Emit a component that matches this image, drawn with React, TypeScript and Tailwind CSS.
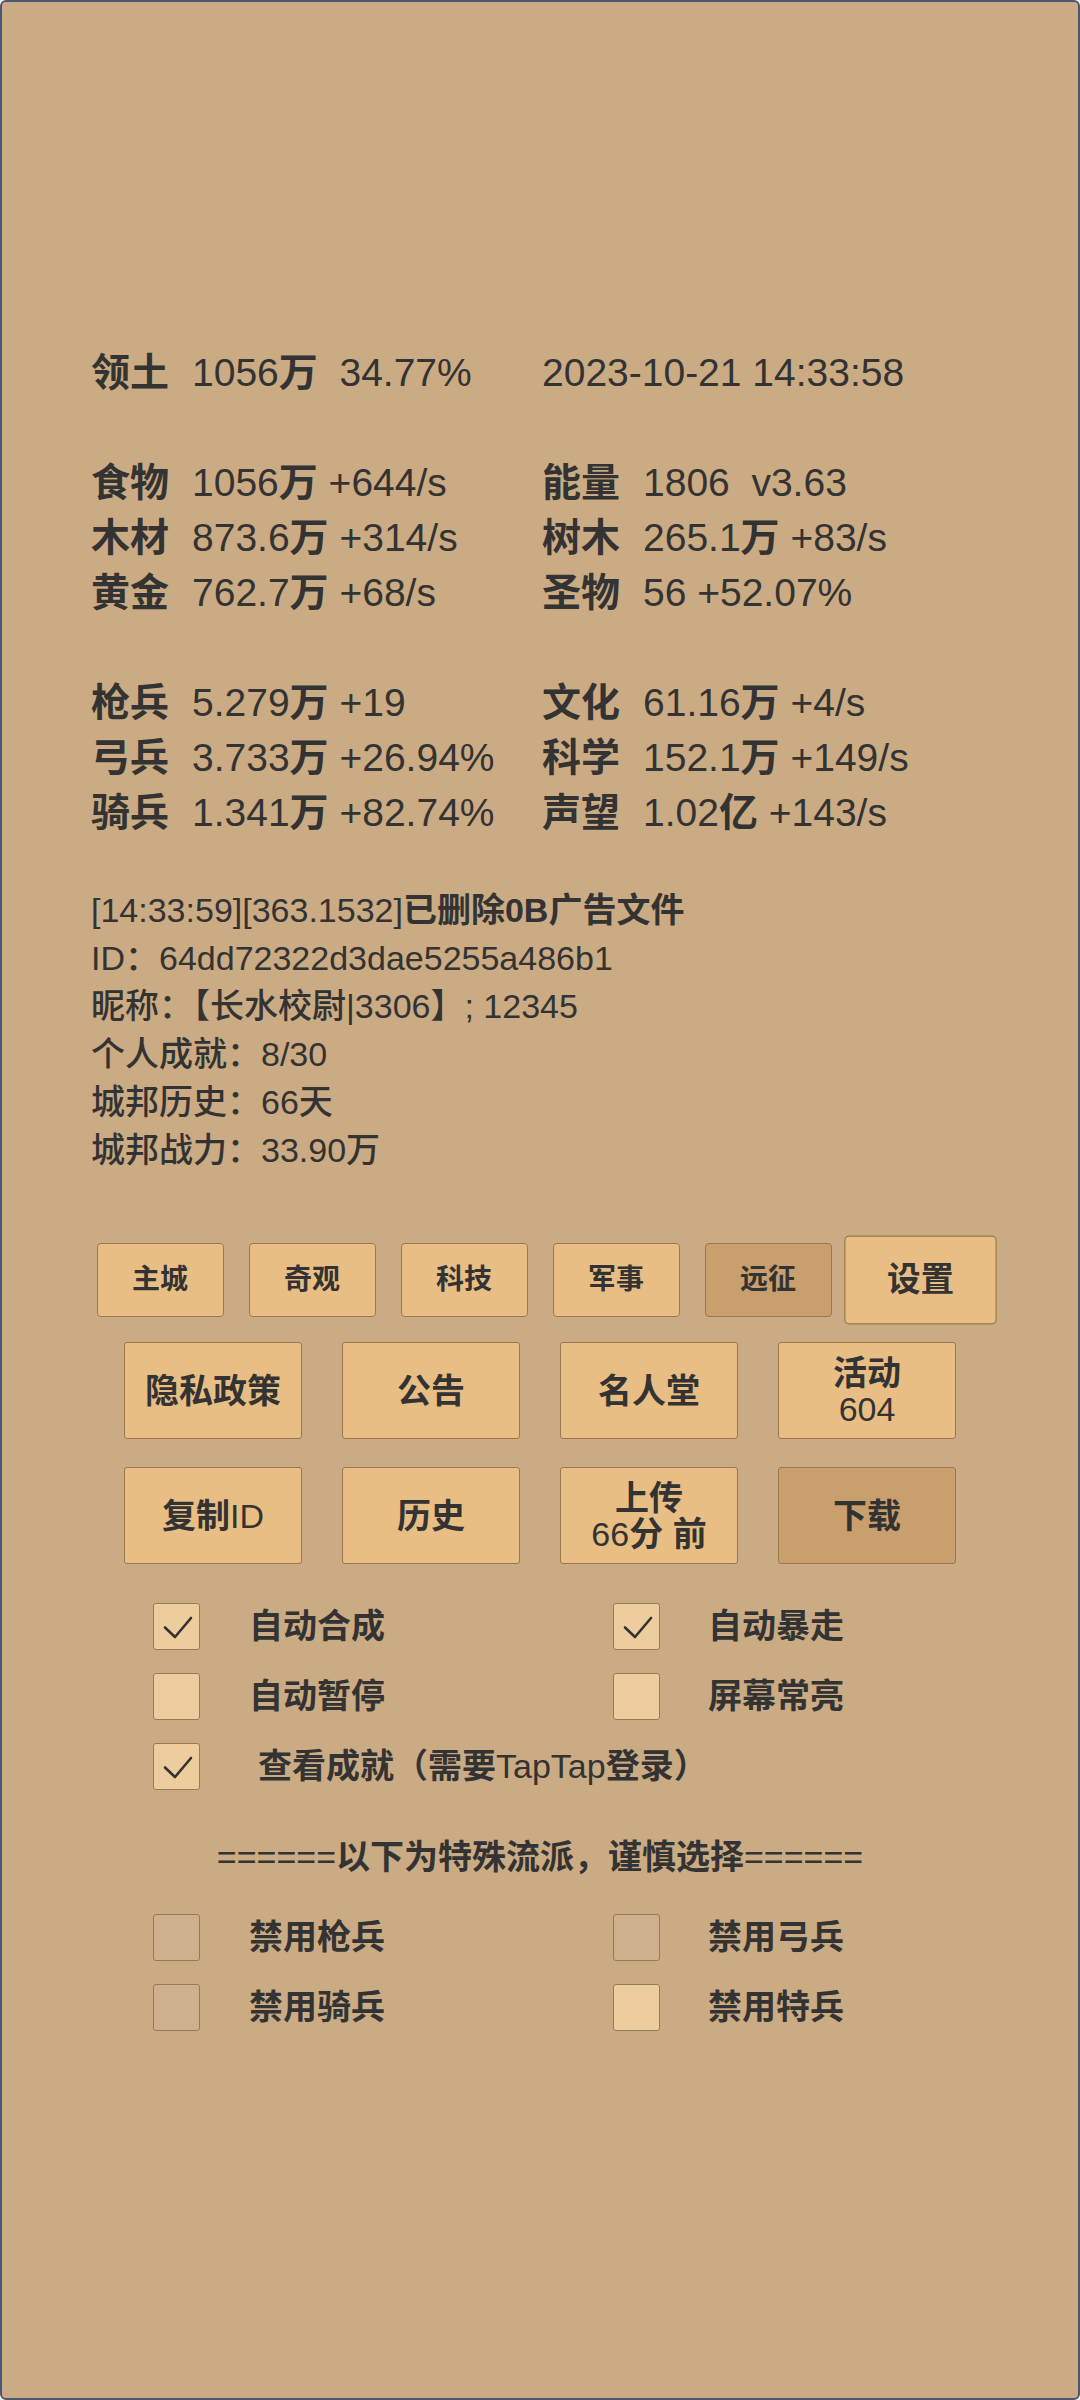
const font = { fontFamily: '"Liberation Sans", "Noto Sans CJK SC", sans-serif' };

const leftStats: [string, string][] = [
  ["领土", "1056万  34.77%"],
  ["", ""],
  ["食物", "1056万 +644/s"],
  ["木材", "873.6万 +314/s"],
  ["黄金", "762.7万 +68/s"],
  ["", ""],
  ["枪兵", "5.279万 +19"],
  ["弓兵", "3.733万 +26.94%"],
  ["骑兵", "1.341万 +82.74%"],
];

const rightStats: [string, string][] = [
  ["", "2023-10-21 14:33:58"],
  ["", ""],
  ["能量", "1806  v3.63"],
  ["树木", "265.1万 +83/s"],
  ["圣物", "56 +52.07%"],
  ["", ""],
  ["文化", "61.16万 +4/s"],
  ["科学", "152.1万 +149/s"],
  ["声望", "1.02亿 +143/s"],
];

const logLines = [
  "ID：64dd72322d3dae5255a486b1",
  "昵称：【长水校尉|3306】; 12345",
  "个人成就：8/30",
  "城邦历史：66天",
  "城邦战力：33.90万",
];

// CJK runs get a heavier weight, latin runs stay regular (as in the game UI)
function Mixed({ text, cjk = "font-bold" }: { text: string; cjk?: string }) {
  const parts = text.split(/([\u3000-\u303f\u4e00-\u9fff\uff00-\uffef]+)/);
  return (
    <>
      {parts.map((p, i) =>
        p === "" ? null : /[\u3000-\u303f\u4e00-\u9fff\uff00-\uffef]/.test(p) ? (
          <span key={i} className={cjk}>
            {p}
          </span>
        ) : (
          <span key={i} className="font-normal">
            {p}
          </span>
        )
      )}
    </>
  );
}

function StatLine({ label, value }: { label: string; value: string }) {
  if (!label && !value) return <div className="h-[55px]" />;
  if (!label) return <div className="h-[55px] whitespace-pre">{value}</div>;
  return (
    <div className="h-[55px] flex whitespace-pre">
      <span className="w-[101px] font-bold">{label}</span>
      <span>
        <Mixed text={value} />
      </span>
    </div>
  );
}

function TabButton({ label, dark, big }: { label: string; dark?: boolean; big?: boolean }) {
  return (
    <div
      className={`w-[127px] h-[74px] flex items-center justify-center rounded-[4px] border border-[#9a784c] text-[28px] font-bold text-[#333] ${
        dark ? "bg-[#c99f6e]" : "bg-[#e9be85]"
      } ${big ? "scale-120" : ""}`}
    >
      {label}
    </div>
  );
}

function BigButton({ lines, dark }: { lines: string[]; dark?: boolean }) {
  return (
    <div
      className={`w-[178px] h-[97px] flex flex-col items-center justify-center rounded-[3px] border border-[#9a784c] text-[34px] leading-[36px] text-[#333] whitespace-pre ${
        dark ? "bg-[#c99f6e]" : "bg-[#e9be85]"
      }`}
    >
      {lines.map((l) => (
        <span key={l}>
          <Mixed text={l} />
        </span>
      ))}
    </div>
  );
}

function Check({ checked, muted }: { checked?: boolean; muted?: boolean }) {
  return (
    <div
      className={`w-[47px] h-[47px] shrink-0 rounded-[3px] border border-[#9a7a55] ${
        muted ? "bg-[#ceb08f]" : "bg-[#edcc9e]"
      }`}
    >
      {checked && (
        <svg width="47" height="47" viewBox="0 0 47 47">
          <polyline points="11,23.5 21,33 37,14" fill="none" stroke="#333" strokeWidth="2.6" strokeLinecap="round" strokeLinejoin="round" />
        </svg>
      )}
    </div>
  );
}

function CheckItem({ label, checked, muted, gap = "ml-[49px]" }: { label: string; checked?: boolean; muted?: boolean; gap?: string }) {
  return (
    <div className="flex items-center h-[47px]">
      <Check checked={checked} muted={muted} />
      <span className={`${gap} text-[34px] text-[#333] whitespace-pre`}>
        <Mixed text={label} />
      </span>
    </div>
  );
}

export default function App() {
  return (
    <div
      className="w-[1080px] h-[2400px] box-border bg-[#cbab83] border-2 border-[#4b5875] rounded-md text-[#333] pt-[343px] overflow-hidden"
      style={font}
    >
      {/* stats */}
      <div className="pl-[89px] grid grid-cols-[451px_1fr] text-[39px] leading-[55px]">
        <div>
          {leftStats.map(([l, v], i) => (
            <StatLine key={i} label={l} value={v} />
          ))}
        </div>
        <div>
          {rightStats.map(([l, v], i) => (
            <StatLine key={i} label={l} value={v} />
          ))}
        </div>
      </div>

      {/* log */}
      <div className="mt-[46px] pl-[89px] text-[34px] leading-[48px]">
        <div className="whitespace-pre">
          [14:33:59][363.1532]<span className="font-bold">已删除0B广告文件</span>
        </div>
        {logLines.map((l) => (
          <div key={l} className="whitespace-pre">
            <Mixed text={l} cjk="font-medium" />
          </div>
        ))}
      </div>

      {/* buttons */}
      <div className="mt-[69px] flex justify-center gap-[25px]">
        <TabButton label="主城" />
        <TabButton label="奇观" />
        <TabButton label="科技" />
        <TabButton label="军事" />
        <TabButton label="远征" dark />
        <TabButton label="设置" big />
      </div>
      <div className="mt-[25px] flex justify-center gap-[40px]">
        <BigButton lines={["隐私政策"]} />
        <BigButton lines={["公告"]} />
        <BigButton lines={["名人堂"]} />
        <BigButton lines={["活动", "604"]} />
      </div>
      <div className="mt-[28px] flex justify-center gap-[40px]">
        <BigButton lines={["复制ID"]} />
        <BigButton lines={["历史"]} />
        <BigButton lines={["上传", "66分 前"]} />
        <BigButton lines={["下载"]} dark />
      </div>

      {/* options */}
      <div className="mt-[39px] pl-[151px] grid grid-cols-[460px_1fr] gap-y-[23px]">
        <CheckItem label="自动合成" checked />
        <CheckItem label="自动暴走" checked gap="ml-[48px]" />
        <CheckItem label="自动暂停" />
        <CheckItem label="屏幕常亮" gap="ml-[48px]" />
        <div className="col-span-2">
          <CheckItem label="查看成就（需要TapTap登录）" checked gap="ml-[58px]" />
        </div>
      </div>

      <div className="mt-[43px] text-center text-[34px] leading-[48px]">
        <Mixed text="======以下为特殊流派，谨慎选择======" />
      </div>

      <div className="mt-[33px] pl-[151px] grid grid-cols-[460px_1fr] gap-y-[23px]">
        <CheckItem label="禁用枪兵" muted />
        <CheckItem label="禁用弓兵" muted gap="ml-[48px]" />
        <CheckItem label="禁用骑兵" muted />
        <CheckItem label="禁用特兵" gap="ml-[48px]" />
      </div>
    </div>
  );
}
